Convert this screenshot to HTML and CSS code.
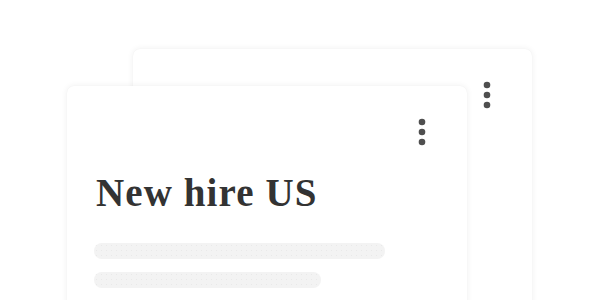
FILE: index.html
```html
<!DOCTYPE html>
<html>
<head>
<meta charset="utf-8">
<link rel="stylesheet" href="styles.css">
</head>
<body>
<div class="stage">
  <div class="card card-back">
    <div class="card-head">
      <svg class="more" width="8" height="28" viewBox="0 0 8 28"><circle cx="4" cy="4" r="3.3"/><circle cx="4" cy="14" r="3.3"/><circle cx="4" cy="24" r="3.3"/></svg>
    </div>
  </div>
  <div class="card card-front">
    <div class="card-head">
      <svg class="more" width="8" height="28" viewBox="0 0 8 28"><circle cx="4" cy="4" r="3.3"/><circle cx="4" cy="14" r="3.3"/><circle cx="4" cy="24" r="3.3"/></svg>
    </div>
    <h1 class="title">New hire US</h1>
    <div class="bars">
      <div class="bar bar-long"></div>
      <div class="bar bar-short"></div>
    </div>
  </div>
</div>
</body>
</html>
```

FILE: styles.css
```css
html, body {
  margin: 0;
  padding: 0;
  background: #ffffff;
  width: 600px;
  height: 300px;
  overflow: hidden;
}

.stage {
  display: grid;
  width: 600px;
  height: 300px;
  overflow: hidden;
}

.card {
  grid-area: 1 / 1;
  background: #ffffff;
  border-radius: 7px;
  box-shadow: 0 0 6px rgba(0, 0, 0, 0.07), 0 0 1px rgba(0, 0, 0, 0.05);
  height: 320px;
  box-sizing: border-box;
}

.card-back {
  margin-left: 133px;
  margin-top: 49px;
  width: 399px;
}

.card-front {
  margin-left: 67px;
  margin-top: 86px;
  width: 400px;
  padding-left: 27px;
}

.card-head {
  display: flex;
  justify-content: flex-end;
  padding-top: 32px;
  padding-right: 41px;
}

.more {
  display: block;
  fill: #4f4f4f;
}

.title {
  margin: 25px 0 0 2px;
  font-family: "Liberation Serif", "Times New Roman", serif;
  font-weight: bold;
  font-size: 39px;
  line-height: 44px;
  color: #333333;
  letter-spacing: 1.1px;
}

.bars {
  display: flex;
  flex-direction: column;
  gap: 13px;
  margin-top: 28px;
}

.bar {
  height: 16px;
  border-radius: 8px;
  background-color: #f3f3f3;
  background-image: radial-gradient(circle, #e9e9e9 0.8px, transparent 1px);
  background-size: 5px 5px;
}

.bar-long { width: 291px; }
.bar-short { width: 227px; }
```
